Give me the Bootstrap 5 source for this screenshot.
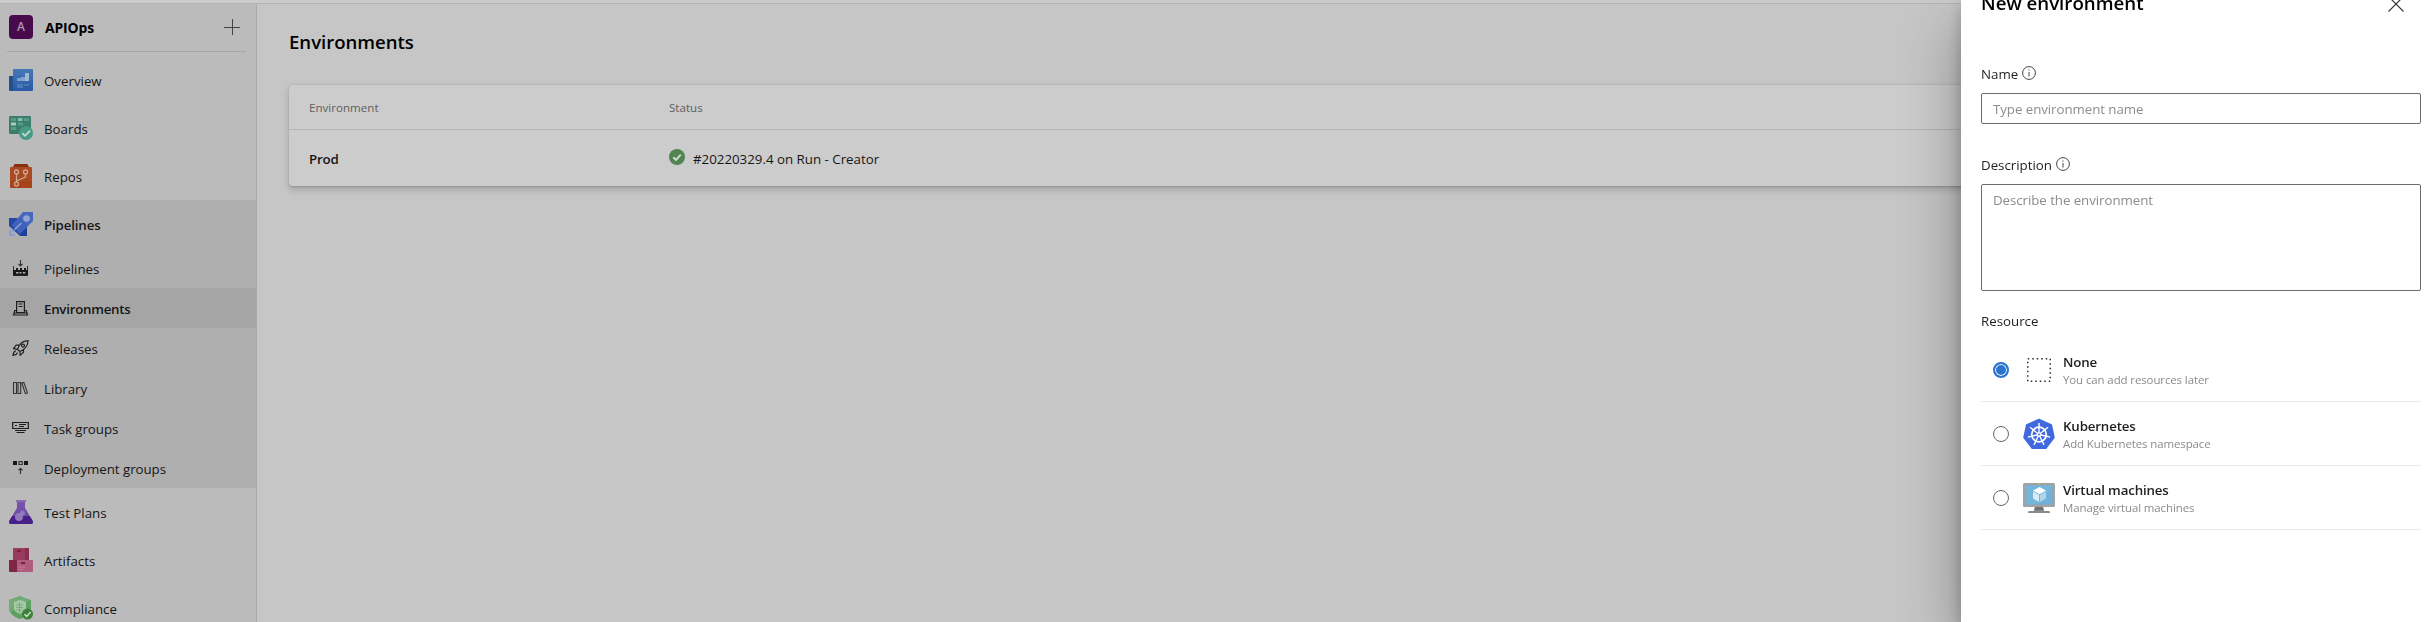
<!DOCTYPE html>
<html lang="en">
<head>
<meta charset="utf-8">
<meta name="viewport" content="width=device-width, initial-scale=1">
<title>Environments - Pipelines</title>
<link href="https://cdn.jsdelivr.net/npm/bootstrap@5.3.0/dist/css/bootstrap.min.css" rel="stylesheet">
<style>
  body { font: 400 13.3px/20px "Open Sans", "Noto Sans", sans-serif; color: #161616; background: #c6c6c6; height: 100vh; overflow: hidden; }
  svg { display: block; flex: none; }
  .fw-semibold { font-weight: 600 !important; letter-spacing: -.15px; }
  .topbar { height: 4px; flex: none; background: #cbcbcb; border-bottom: 1px solid #b2b2b2; }
  .side { width: 257px; flex: none; background: #bbb; border-right: 1px solid #acacac; }
  .project { height: 47px; padding: 0 16px 0 9px; margin-bottom: 0; }
  .project b { font-size: 13.9px; color: #000; letter-spacing: -.1px; }
  .avatar { width: 24px; height: 24px; border-radius: 4px; background: #470b4b; color: #b196b2; font-size: 12px; }
  .rule { height: 1px; margin: 0 10px 4px 7px; background: #a6a6a6; }
  .hub, .sub { display: flex; align-items: center; color: #161616; text-decoration: none; padding-left: 9px; }
  .hub { height: 48px; gap: 11px; }
  .sub { height: 40px; gap: 15px; padding-left: 12px; letter-spacing: -.04px; }
  .hub > span, .sub > span { padding-top: 2px; }
  .open-hub { background: #afafaf; }
  .sub.current { background: #a5a5a5; border-radius: 0 2px 2px 0; letter-spacing: -.25px; }
  .page-title { font-size: 18.6px; line-height: 28px; font-weight: 600; color: #000; margin: 24px 0 29px; letter-spacing: -.03px; }
  .env-card { background: #ccc; border: 0; border-radius: 4px; margin: 0 32px; box-shadow: 0 3.2px 7.2px rgba(0,0,0,.17), 0 .6px 1.8px rgba(0,0,0,.14); }
  .env-row { display: grid; grid-template-columns: 360px 1fr; padding: 0 20px; align-items: center; }
  .env-head { height: 45px; padding-top: 1px; border-bottom: 1px solid #b6b6b6; font-size: 11.6px; color: #5f5f5f; }
  .env-body { height: 56px; padding-top: 2px; }
  .panel { position: fixed; top: 0; right: 0; bottom: 0; width: 472px; background: #fff; padding: 0 12px 0 20px; box-shadow: 0 25.6px 57.6px rgba(0,0,0,.32), 0 4.8px 14.4px rgba(0,0,0,.24); color: #1f1f1f; overflow: hidden; }
  .panel-head { height: 32px; margin-top: -12px; padding-right: 17px; }
  .panel-head h2 { font-size: 18.7px; line-height: 28px; font-weight: 600; color: #000; margin: -2px 0 0; }
  .field-label { display: flex; gap: 4px; height: 20px; margin-bottom: 9px; }
  .form-control { font-size: 13.3px; line-height: 20px; border: 1px solid #6c6c6c; border-radius: 2px; padding: 5px 11px; resize: none; letter-spacing: -.06px; }
  .form-control::placeholder { color: #8c8c8c; opacity: 1; }
  .option { height: 64px; border-bottom: 1px solid #eaeaea; padding-left: 12px; margin: 0; }
  .option small { display: block; font-size: 11.45px; line-height: 16px; color: #8b8b8b; letter-spacing: -.09px; }
  .option b { display: block; line-height: 18px; padding: 1px 0; color: #222; }
  .pick { width: 16px; height: 16px; margin: 0 14px 0 0; border: 1px solid #666; border-radius: 50%; appearance: none; background: #fff; flex: none; }
  .pick:checked { border: 2px solid #2b74d0; background: #2b74d0; box-shadow: inset 0 0 0 1px #fff; }
</style>
<script src="https://cdn.jsdelivr.net/npm/bootstrap@5.3.0/dist/js/bootstrap.bundle.min.js"></script>
</head>
<body class="d-flex flex-column">
<header class="topbar"></header>
<div class="d-flex flex-grow-1 overflow-hidden">
  <nav class="side overflow-hidden">
    <div class="project d-flex align-items-center">
      <span class="avatar d-flex align-items-center justify-content-center fw-semibold" style="margin-top:-1px">A</span>
      <b class="fw-bold ms-2 ps-1 flex-grow-1">APIOps</b>
      <svg width="16" height="16" viewBox="0 0 16 16" style="margin-top:-1px"><path d="M0 8.500h16M8.500 0v16" stroke="#444" stroke-width="1"/></svg>
    </div>
    <div class="rule"></div>

    <a class="hub" href="#">
      <svg width="24" height="24" viewBox="0 0 24 24"><defs><linearGradient id="ov" x1="0" y1="0" x2="0" y2="1"><stop stop-color="#4679b8"/><stop offset="1" stop-color="#2957a5"/></linearGradient></defs><path d="M0 8h5v15H1q-1 0-1-1z" fill="#244f8b"/><path d="M5 1h18q1 0 1 1v20q0 1-1 1H4V2q0-1 1-1z" fill="url(#ov)"/><path d="M8 10h4v-1h4V5h4v8H8z" fill="#7fa3ca"/><path d="M16 5h4v8h-4z" fill="#9db8d2"/><path d="M8 16h6v4H8z" fill="#4a7bb8"/><path d="M15 16h5v2h-5z" fill="#4876b4"/></svg>
      <span>Overview</span></a>
    <a class="hub" href="#">
      <svg width="24" height="24" viewBox="0 0 24 24"><rect width="22" height="18" rx="1" fill="#3c7e6c"/><path d="M2 2h5v3H2zM15 2h5v3h-5zM9 6.500h5v3H9zM2 11h5v3H2z" fill="#589a87"/><path d="M9 2h4.500v3H9z" fill="#84bda9"/><path d="M2 6.500h5v3H2z" fill="#a3cdbf"/><circle cx="17" cy="17" r="7" fill="#479a83"/><path d="M13.300 17.200l2.700 2.600 5-5.200" fill="none" stroke="#c9dad5" stroke-width="1.700"/></svg>
      <span>Boards</span></a>
    <a class="hub" href="#">
      <svg width="24" height="24" viewBox="0 0 24 24"><path d="M5 1q.3-1 1-1h12q.7 0 1 1l2 4H3z" fill="#87310e"/><path d="M2 3h20q1 0 1 1v19q0 1-1 1H2q-1 0-1-1V4q0-1 1-1z" fill="#a94a22"/><path d="M1 17h22v6q0 1-1 1H2q-1 0-1-1z" fill="#a8421a"/><g fill="none" stroke="#d0a690" stroke-width="1.300"><circle cx="7.500" cy="8" r="2"/><circle cx="16.500" cy="8" r="2"/><circle cx="7.500" cy="20" r="2"/><path d="M7.500 10v8M16.500 10v3l-9 4"/></g></svg>
      <span>Repos</span></a>

    <div class="open-hub">
      <a class="hub fw-semibold" href="#">
        <svg width="24" height="24" viewBox="0 0 24 24"><path d="M0 6h8l10 9v9h-7L0 14z" fill="#2748a3"/><path d="M14 0h10v9L11 22l-8-9z" fill="#4567c0"/><path d="M11 22l7-7v9h-7z" fill="#203f98"/><path d="M3 13l8-8 8 8-8 8z" fill="#3c5db9" opacity=".6"/><circle cx="17.500" cy="6.500" r="3.300" fill="#91a5d4"/><path d="M5.500 17.500l7-6.500" stroke="#92a5d1" stroke-width="1.400"/><path d="M0 14.500L4 18 8 21.500 7 24H0z" fill="#afafaf"/><path d="M0 18h2v4h4v2H0zM2 15.500l4 3.500-3 2z" fill="#8a9dce"/></svg>
        <span>Pipelines</span></a>
      <a class="sub" href="#">
        <svg width="17" height="16" viewBox="0 0 17 16"><path d="M8.500 0v6M6.500 4l2 2 2-2" fill="none" stroke="#333" stroke-width="1.100"/><path d="M1.500 6v9.500h14V6" fill="none" stroke="#333"/><path d="M1 10h15v5.500H1z" fill="#181818"/><path d="M4 8h2v2H4zM8 8h2v2H8zM12 8h2v2h-2z" fill="#181818"/><path d="M4 12h2.500v1.500H4zM7.500 12h2v1.500h-2zM10.800 12h2.500v1.500h-2.500z" fill="#afafaf"/></svg>
        <span>Pipelines</span></a>
      <a class="sub current fw-semibold" href="#">
        <svg width="17" height="16" viewBox="0 0 17 16" fill="none" stroke="#1c1c1c" stroke-width="1.200"><path d="M4.600 12.500V1.600h7.800v10.900zM6.500 4h4M6.500 6.500h4M4.500 10.500H2.800L1.500 15h14l-1.300-4.500h-1.700M1.500 13h14"/></svg>
        <span>Environments</span></a>
      <a class="sub" href="#">
        <svg width="17" height="16" viewBox="0 0 17 16" fill="none" stroke="#222" stroke-width="1.200"><path d="M5.500 9.500C7 4 11 1 16 .7c0 4.500-3 8.500-8 10.800zM7.300 5.200H4.200L1.500 8.500l4 .8M11.500 9.500v2.800l-3.300 2.900-.4-3.700"/><circle cx="11" cy="5.600" r="1.500"/><path d="M3.800 10.800c-1.600.4-2.500 1.800-2.800 4.500 2.500-.2 3.900-1 4.500-2.700"/></svg>
        <span>Releases</span></a>
      <a class="sub" href="#">
        <svg width="17" height="16" viewBox="0 0 17 16" fill="none" stroke="#333" stroke-width="1.100"><path d="M1.500 2.500h3v11h-3zM6 2.500h2.700v11H6zM9.800 3l2-.6 3.700 10.500-2.100.7z"/></svg>
        <span>Library</span></a>
      <a class="sub" href="#">
        <svg width="17" height="16" viewBox="0 0 17 16" fill="none" stroke="#1c1c1c" stroke-width="1.200"><path d="M.7 2.500h15.600v6H.7zM7 4.500h7M7 6.500h5M3 5.500h2M3 10.500h11M4.500 12.500h8"/></svg>
        <span>Task groups</span></a>
      <a class="sub" href="#">
        <svg width="17" height="16" viewBox="0 0 17 16"><path d="M1 1h4v4H1zM12 1h4v4h-4z" fill="#151515"/><path d="M7 1.500h3.200v3H7zM8.500 14V8.500M6.500 10.300l2-2 2 2" fill="none" stroke="#333" stroke-width="1.200"/></svg>
        <span>Deployment groups</span></a>
    </div>

    <a class="hub" href="#">
      <svg width="24" height="24" viewBox="0 0 24 24"><defs><linearGradient id="fl" x1="0" y1="0" x2="0" y2="1"><stop stop-color="#7957ac"/><stop offset="1" stop-color="#6642a3"/></linearGradient></defs><path d="M8 1h8v7l7.500 12.500Q25 24 21 24H3q-4 0-2.500-3.500L8 8z" fill="url(#fl)"/><path d="M3.300 16h17.400l2.800 4.500Q25 24 21 24H3q-4 0-2.500-3.500z" fill="#47208a"/><path d="M7 0h10v2H7z" fill="#8a6bb6"/><circle cx="10" cy="17" r="4" fill="#9279ba"/><circle cx="13.500" cy="13" r="2.500" fill="#9a83c0" opacity=".8"/></svg>
      <span>Test Plans</span></a>
    <a class="hub" href="#">
      <svg width="24" height="24" viewBox="0 0 24 24"><path d="M5 0h14q1 0 1 1v11H4V1q0-1 1-1z" fill="#973a5b"/><path d="M16 0h3q1 0 1 1v11h-4z" fill="#8b2f50"/><path d="M0 12h9v12H1q-1 0-1-1z" fill="#802645"/><path d="M9 12h15v11q0 1-1 1H8V12z" fill="#b05c7d"/><path d="M8 2h4v2H8zM4 14h3v2H4zM12 14h4v2h-4z" fill="#7d1f40"/><path d="M10 19h6M10 21.500h4" stroke="#c47b97"/></svg>
      <span>Artifacts</span></a>
    <a class="hub" href="#">
      <svg width="24" height="24" viewBox="0 0 24 24"><path d="M11 0l3 1.500L22 4v8c0 5-5 9-11 11C5 21 0 17 0 12V4l7-2.500z" fill="#5da061"/><path d="M11 0L7 1.500 0 4v8q0 2 1 4L21 4l-7-2.500z" fill="#70ac74"/><path d="M11 4l6 2v6c0 3-3 5-6 6-3-1-6-3-6-6V6z" fill="#a7c7a8"/><path d="M7 9h7M7 11.500h7M7 14h6M10.500 6v11" stroke="#70a673" stroke-width=".8"/><circle cx="18.500" cy="18" r="5.500" fill="#3b8139"/><path d="M15.500 18.200l2.200 2.200 4-4.300" fill="none" stroke="#d0dfd0" stroke-width="1.500"/></svg>
      <span>Compliance</span></a>
  </nav>

  <main class="flex-grow-1">
    <h1 class="page-title ms-4 ps-2">Environments</h1>
    <section class="env-card card">
      <div class="env-row env-head"><span>Environment</span><span>Status</span></div>
      <div class="env-row env-body">
        <span class="fw-semibold">Prod</span>
        <span class="d-flex align-items-center gap-2">
          <svg width="16" height="16" viewBox="0 0 16 16" style="margin-top:-4px"><circle cx="8" cy="8" r="8" fill="#508450"/><path d="M4.300 8.200l2.700 2.700 4.800-5.300" fill="none" stroke="#d4dcd4" stroke-width="2"/></svg>
          <span>#20220329.4 on Run - Creator</span>
        </span>
      </div>
    </section>
  </main>
</div>

<aside class="panel" role="dialog" aria-label="New environment">
  <div class="panel-head d-flex align-items-center justify-content-between">
    <h2>New environment</h2>
    <svg width="16" height="16" viewBox="0 0 16 16"><path d="M.5.5l15 15M15.500.5l-15 15" stroke="#333" stroke-width="1.100"/></svg>
  </div>
  <div class="field-label" style="margin-top:44px"><span>Name</span>
    <svg width="14" height="14" viewBox="0 0 14 14" style="margin-top:2px"><circle cx="7" cy="7" r="6.400" fill="none" stroke="#444"/><path d="M7 6v4.500M7 3.500v1.200" stroke="#444"/></svg>
  </div>
  <input class="form-control" style="height:31px" placeholder="Type environment name">
  <div class="field-label" style="margin-top:31px"><span>Description</span>
    <svg width="14" height="14" viewBox="0 0 14 14" style="margin-top:2px"><circle cx="7" cy="7" r="6.400" fill="none" stroke="#444"/><path d="M7 6v4.500M7 3.500v1.200" stroke="#444"/></svg>
  </div>
  <textarea class="form-control" style="height:107px" placeholder="Describe the environment"></textarea>
  <div style="margin:20px 0 7px">Resource</div>

  <label class="option d-flex align-items-center">
    <input class="pick" type="radio" name="resource" checked>
    <svg class="me-2" width="32" height="32" viewBox="0 0 32 32"><path d="M4.750 4.750h22.500v22.500h-22.500z" fill="none" stroke="#2c2c2c" stroke-width="1.500" stroke-dasharray="1.500 3"/></svg>
    <span><b class="fw-semibold">None</b><small>You can add resources later</small></span>
  </label>
  <label class="option d-flex align-items-center">
    <input class="pick" type="radio" name="resource">
    <svg class="me-2" width="32" height="32" viewBox="0 0 32 32"><path d="M16 1.500L28.300 7l2.700 12.500L22.800 30.300H9.200L1 19.500 3.700 7z" fill="#4069e0" stroke="#4069e0" stroke-width="1.500" stroke-linejoin="round"/><g fill="none" stroke="#fff"><circle cx="16" cy="16.500" r="7.300" stroke-width="1.700"/><path d="M16 16.500V5M16 16.500l9-7.200M16 16.500l11.200 2.600M16 16.500l5 10.400M16 16.500l-5 10.400M16 16.500L4.800 19.100M16 16.500L7 9.300" stroke-width="1.400"/></g><circle cx="16" cy="16.500" r="2.200" fill="#fff"/><circle cx="16" cy="16.500" r=".9" fill="#4069e0"/></svg>
    <span><b class="fw-semibold">Kubernetes</b><small>Add Kubernetes namespace</small></span>
  </label>
  <label class="option d-flex align-items-center">
    <input class="pick" type="radio" name="resource">
    <svg class="me-2" width="32" height="32" viewBox="0 0 32 32"><path d="M12 25h8l1 4h5q1 0 1 2H5q0-2 1-2h5z" fill="#8a8a8a"/><path d="M12 25h8l.8 3h-9.600z" fill="#737373"/><rect y="1" width="32" height="24" rx="1.500" fill="#a2a2a2"/><path d="M2.500 3.500h27v19h-27z" fill="#6fb1d8"/><path d="M2.500 3.500h27L16 22.500H2.500z" fill="#76b6db"/><path d="M15 1.700h2v1h-2z" fill="#b7c82e"/><path d="M16.500 5l6.500 3.500-6.500 3.700L10 8.500z" fill="#fff"/><path d="M10 9.500l6 3.500v7l-6-3.500z" fill="#d9ebf5"/><path d="M23 9.500L17 13v7l6-3.500z" fill="#b1d5e9"/></svg>
    <span><b class="fw-semibold">Virtual machines</b><small>Manage virtual machines</small></span>
  </label>
</aside>
</body>
</html>
